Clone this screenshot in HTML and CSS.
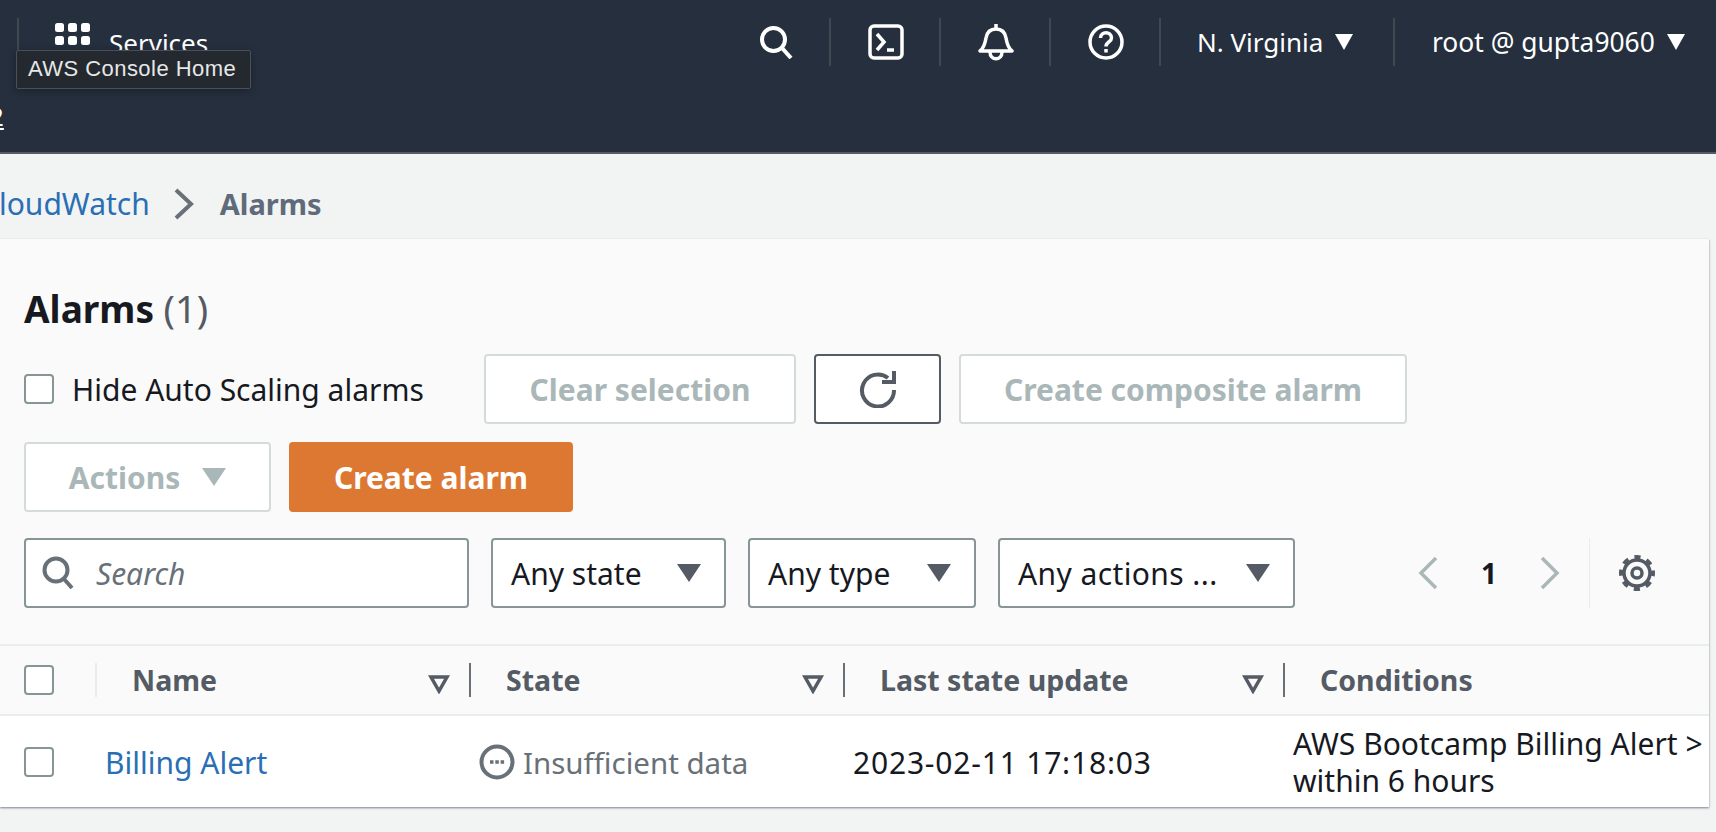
FILE: index.html
```html
<!DOCTYPE html>
<html lang="en">

<head>
  <meta charset="UTF-8">
  <meta name="viewport" content="width=device-width, initial-scale=1.0">
  <title>Alarms | CloudWatch</title>
  <link rel="stylesheet" href="styles.css">
</head>

<body>
  <header class="topbar">
    <div class="topbar-row">
      <div class="services">
        <svg class="grid-icon" width="36" height="36" viewBox="0 0 36 36" fill="#fff">
          <rect x="0" y="0" width="9" height="9" rx="2.5"/>
          <rect x="13" y="0" width="9" height="9" rx="2.5"/>
          <rect x="26" y="0" width="9" height="9" rx="2.5"/>
          <rect x="0" y="13" width="9" height="9" rx="2.5"/>
          <rect x="13" y="13" width="9" height="9" rx="2.5"/>
          <rect x="26" y="13" width="9" height="9" rx="2.5"/>
        </svg>
        <span>Services</span>
      </div>
      <div class="topbar-right">
        <div class="icon-cell">
          <svg width="34" height="34" viewBox="0 0 34 34" fill="none" stroke="#fff" stroke-width="4">
            <circle cx="14.5" cy="14.5" r="11.5"/>
            <path d="M23 23l9 10"/>
          </svg>
        </div>
        <div class="icon-cell">
          <svg width="36" height="36" viewBox="0 0 36 36" fill="none" stroke="#fff" stroke-width="3.5">
            <rect x="2" y="2" width="32" height="32" rx="4"/>
            <path d="M9 10l7 8-7 8"/>
            <path d="M19 26h7"/>
          </svg>
        </div>
        <div class="icon-cell">
          <svg width="36" height="38" viewBox="0 0 36 38" fill="none" stroke="#fff" stroke-width="3.5">
            <path d="M18 1v4"/>
            <path d="M2 28c4-3 5-7 6-13 1-6 5-9 10-9s9 3 10 9c1 6 2 10 6 13z" stroke-linejoin="round"/>
            <path d="M12 29c0 9 12 9 12 0"/>
          </svg>
        </div>
        <div class="icon-cell">
          <svg width="36" height="36" viewBox="0 0 36 36" fill="none" stroke="#fff" stroke-width="3.5">
            <circle cx="18" cy="18" r="16"/>
            <path d="M12.5 14c0-7 11-7 11 0 0 4-5.500 4-5.500 8.500"/>
            <path d="M18 25v3.500"/>
          </svg>
        </div>
        <div class="menu-cell region">N. Virginia<i class="caret"></i></div>
        <div class="menu-cell account">root @ gupta9060<i class="caret"></i></div>
      </div>
    </div>
    <div class="topbar-sub"><a href="#">2</a></div>
    <div class="tooltip">AWS Console Home</div>
  </header>

  <nav class="breadcrumb">
    <a href="#">CloudWatch</a>
    <svg width="22" height="32" viewBox="0 0 22 32" fill="none" stroke="#687078" stroke-width="4">
      <path d="M3 2l15 14L3 30"/>
    </svg>
    <span>Alarms</span>
  </nav>

  <main class="panel">
    <h1 class="panel-title">Alarms <span>(1)</span></h1>

    <div class="toolbar">
      <label class="hide-scaling"><span class="box"></span>Hide Auto Scaling alarms</label>
      <button class="btn btn-clear" disabled>Clear selection</button>
      <button class="btn btn-refresh">
        <svg width="38" height="38" viewBox="0 0 38 38" fill="none" stroke="#545b64" stroke-width="4">
          <path d="M29 8a16 16 0 1 0 6 12"/>
          <path d="M23 12h12V1"/>
        </svg>
      </button>
      <button class="btn btn-composite" disabled>Create composite alarm</button>
    </div>

    <div class="toolbar toolbar-second">
      <button class="btn btn-actions" disabled>Actions<i class="caret caret-disabled"></i></button>
      <button class="btn btn-create">Create alarm</button>
    </div>

    <div class="filters">
      <div class="search">
        <svg width="32" height="34" viewBox="0 0 32 34" fill="none" stroke="#687078" stroke-width="4">
          <circle cx="14" cy="14" r="11.500"/>
          <path d="M22 23l8 9"/>
        </svg>
        <span>Search</span>
      </div>
      <div class="select select-state">Any state<i class="caret caret-dark"></i></div>
      <div class="select select-type">Any type<i class="caret caret-dark"></i></div>
      <div class="select select-actions">Any actions ...<i class="caret caret-dark"></i></div>
      <div class="pager">
        <svg width="22" height="34" viewBox="0 0 22 34" fill="none" stroke="#aab7b8" stroke-width="3.500"><path d="M19 2L4 17l15 15"/></svg>
        <b>1</b>
        <svg width="22" height="34" viewBox="0 0 22 34" fill="none" stroke="#aab7b8" stroke-width="3.500"><path d="M3 2l15 15L3 32"/></svg>
      </div>
      <div class="settings">
        <svg width="36" height="36" viewBox="0 0 36 36" fill="none" stroke="#545b64">
          <circle cx="18" cy="18" r="13" stroke-width="3.500"/>
          <circle cx="18" cy="18" r="15.500" stroke-width="5" stroke-dasharray="6 6.170" stroke-dashoffset="3"/>
          <circle cx="18" cy="18" r="5" stroke-width="3.500"/>
        </svg>
      </div>
    </div>

    <table class="alarms">
      <colgroup>
        <col class="col-check">
        <col class="col-name">
        <col class="col-state">
        <col class="col-update">
        <col class="col-cond">
      </colgroup>
      <thead>
        <tr>
          <th class="cell-check"><span class="box"></span></th>
          <th><div class="th-inner th-light">Name<svg class="sort" width="22" height="20" viewBox="0 0 22 20" fill="none" stroke="#545b64" stroke-width="3.500"><path d="M3 3h16l-8 14z"/></svg></div></th>
          <th><div class="th-inner">State<svg class="sort" width="22" height="20" viewBox="0 0 22 20" fill="none" stroke="#545b64" stroke-width="3.500"><path d="M3 3h16l-8 14z"/></svg></div></th>
          <th><div class="th-inner">Last state update<svg class="sort" width="22" height="20" viewBox="0 0 22 20" fill="none" stroke="#545b64" stroke-width="3.500"><path d="M3 3h16l-8 14z"/></svg></div></th>
          <th><div class="th-inner th-last">Conditions</div></th>
        </tr>
      </thead>
      <tbody>
        <tr>
          <td class="cell-check"><span class="box"></span></td>
          <td><a href="#">Billing Alert</a></td>
          <td>
            <div class="state">
              <svg width="36" height="36" viewBox="0 0 36 36" fill="none" stroke="#687078" stroke-width="4">
                <circle cx="18" cy="18" r="15.500"/>
                <path d="M11 18h3.500M16.300 18h3.500M21.600 18h3.500" stroke-width="3.500"/>
              </svg>
              <span>Insufficient data</span>
            </div>
          </td>
          <td class="updated">2023-02-11 17:18:03</td>
          <td class="cond">AWS Bootcamp Billing Alert &gt;<br>within 6 hours</td>
        </tr>
      </tbody>
    </table>
  </main>
</body>
</html>
```

FILE: styles.css
```css
html, body {
  margin: 0;
  height: 832px;
  overflow: hidden;
}
body {
  background-color: #f2f3f3;
  color: #16191f;
  font-family: "Noto Sans", "Open Sans", sans-serif;
  font-size: 30px;
}
a {
  color: #2a6fb5;
  text-decoration: none;
}
svg {
  display: block;
  flex: none;
}

/* top navigation */
.topbar {
  position: relative;
  height: 152px;
  background-color: #252f3e;
  border-bottom: 2px solid #545b64;
  color: #fff;
  font-size: 26px;
  overflow: hidden;
}
.topbar-row {
  display: flex;
  align-items: flex-start;
  padding-top: 18px;
}
.services {
  display: flex;
  align-items: flex-start;
  height: 48px;
  margin-left: 17px;
  padding-left: 36px;
  border-left: 2px solid #414750;
  box-sizing: border-box;
}
.grid-icon {
  margin-top: 5px;
}
.services span {
  margin-left: 18px;
  margin-top: 8px;
  line-height: 34px;
}
.topbar-right {
  display: flex;
  margin-left: auto;
}
.icon-cell {
  display: flex;
  justify-content: center;
  align-items: center;
  width: 110px;
  height: 48px;
  padding-left: 2px;
  border-right: 2px solid #414750;
  box-sizing: border-box;
}
.menu-cell {
  display: flex;
  align-items: center;
  height: 48px;
  box-sizing: border-box;
}
.region {
  width: 234px;
  padding-left: 36px;
  border-right: 2px solid #414750;
}
.account {
  width: 321px;
  padding-left: 37px;
  font-size: 26.4px;
}
.caret {
  display: inline-block;
  width: 0;
  height: 0;
  margin-left: 12px;
  border-left: 9px solid transparent;
  border-right: 9px solid transparent;
  border-top: 16px solid #fff;
}
.topbar-sub {
  margin-top: 34px;
  line-height: 32px;
}
.topbar-sub a {
  display: inline-block;
  margin-left: -11px;
  color: #fff;
  text-decoration: underline;
}
.tooltip {
  position: absolute;
  left: 16px;
  top: 50px;
  padding: 0 14px 0 11px;
  height: 37px;
  line-height: 36px;
  background-color: #24282f;
  border: 1px solid #4b4f56;
  border-radius: 2px;
  box-shadow: 0 2px 8px rgba(0, 0, 0, 0.3);
  color: #e6e7e8;
  font-family: "Liberation Sans", Arial, sans-serif;
  font-size: 22px;
  letter-spacing: 0.45px;
  white-space: nowrap;
}

/* breadcrumb */
.breadcrumb {
  display: flex;
  align-items: center;
  height: 85px;
  padding-top: 14px;
  margin-left: -20px;
  box-sizing: border-box;
}
.breadcrumb svg {
  margin-left: 23px;
}
.breadcrumb span {
  margin-left: 25px;
  color: #5f6b7a;
  font-size: 29px;
  font-weight: 700;
}

/* main panel */
.panel {
  width: 1709px;
  height: 568px;
  background-color: #fafafa;
  box-shadow: 0 1px 2px rgba(0, 22, 40, 0.5);
  overflow: hidden;
}
.panel-title {
  height: 95px;
  margin: 0;
  padding: 45px 0 0 24px;
  font-size: 37px;
  line-height: 48px;
  font-weight: 700;
  box-sizing: border-box;
}
.panel-title span {
  color: #545b64;
  font-size: 38px;
  font-weight: 400;
}
.toolbar {
  display: flex;
  align-items: center;
  gap: 18px;
  margin: 20px 0 0 24px;
}
.toolbar-second {
  margin-top: 18px;
}
.box {
  display: block;
  flex: none;
  width: 30px;
  height: 30px;
  background-color: #fff;
  border: 2px solid #879596;
  border-radius: 4px;
  box-sizing: border-box;
}
.hide-scaling {
  display: flex;
  align-items: center;
  gap: 18px;
  width: 442px;
  white-space: nowrap;
}
.btn {
  display: flex;
  justify-content: center;
  align-items: center;
  height: 70px;
  padding: 0;
  background-color: #fff;
  border: 2px solid #d5dbdb;
  border-radius: 4px;
  color: #aab7b8;
  font-family: inherit;
  font-size: 30px;
  font-weight: 700;
  box-sizing: border-box;
}
.btn-clear {
  width: 312px;
}
.btn-refresh {
  width: 127px;
  border-color: #545b64;
}
.btn-composite {
  width: 448px;
}
.btn-actions {
  width: 247px;
}
.btn-create {
  width: 284px;
  background-color: #dd7832;
  border-color: #dd7832;
  color: #fff;
}
.caret-disabled {
  margin-left: 22px;
  border-left-width: 12px;
  border-right-width: 12px;
  border-top: 18px solid #aab7b8;
}

/* filter row */
.filters {
  display: flex;
  align-items: center;
  margin: 26px 0 0 24px;
  height: 70px;
}
.search {
  display: flex;
  align-items: center;
  width: 445px;
  height: 70px;
  padding-left: 16px;
  background-color: #fff;
  border: 2px solid #879596;
  border-radius: 4px;
  box-sizing: border-box;
  color: #687078;
  font-style: italic;
}
.search span {
  margin-left: 22px;
}
.select {
  display: flex;
  justify-content: space-between;
  align-items: center;
  height: 70px;
  padding: 0 23px 0 18px;
  background-color: #fff;
  border: 2px solid #879596;
  border-radius: 4px;
  box-sizing: border-box;
  white-space: nowrap;
}
.select-state {
  width: 235px;
  margin-left: 22px;
}
.select-type {
  width: 228px;
  margin-left: 22px;
}
.select-actions {
  width: 297px;
  margin-left: 22px;
  letter-spacing: 0.4px;
}
.caret-dark {
  border-left-width: 12px;
  border-right-width: 12px;
  border-top: 18px solid #545b64;
}
.pager {
  display: flex;
  align-items: center;
  margin-left: 122px;
}
.pager b {
  width: 100px;
  text-align: center;
  font-size: 28px;
}
.settings {
  display: flex;
  align-items: center;
  height: 70px;
  margin-left: 28px;
  padding-left: 29px;
  border-left: 1px solid #eaeded;
}

/* table */
.alarms {
  width: 1709px;
  margin-top: 36px;
  border-collapse: collapse;
  table-layout: fixed;
}
.col-check {
  width: 97px;
}
.col-name,
.col-state {
  width: 374px;
}
.col-update {
  width: 440px;
}
.alarms thead tr {
  height: 70px;
  border-top: 2px solid #eaeded;
  border-bottom: 2px solid #eaeded;
}
.alarms th {
  padding: 0;
  text-align: left;
  color: #545b64;
  font-size: 28.5px;
  font-weight: 700;
}
.th-inner {
  display: flex;
  align-items: center;
  height: 34px;
  padding-left: 35px;
  position: relative;
}
.th-inner .sort {
  position: absolute;
  right: 21px;
  top: 11px;
}
.alarms th + th + th .th-inner,
.alarms th .th-last {
  border-left: 2px solid #687078;
  margin-left: -2px;
}
.th-light {
  border-left: 2px solid #eaeded;
  margin-left: -2px;
}
.alarms td {
  height: 92px;
  padding: 0 0 0 8px;
  background-color: #fff;
  white-space: nowrap;
  overflow: hidden;
}
.alarms .cell-check {
  padding-left: 24px;
}
.state {
  display: flex;
  align-items: center;
  gap: 8px;
  color: #687078;
  font-size: 29.5px;
}
.updated {
  letter-spacing: 0.8px;
}
.cond {
  line-height: 37px;
}
```
